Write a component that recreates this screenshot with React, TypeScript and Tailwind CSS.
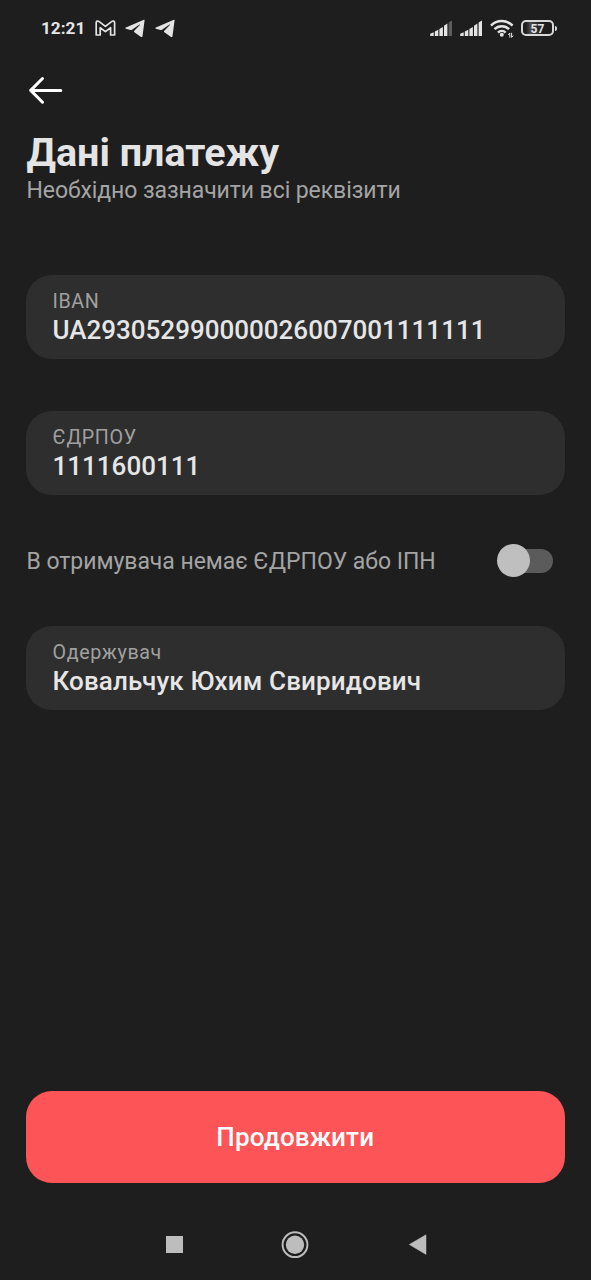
import React from 'react';

const TelegramIcon = () => (
  <svg width="20" height="19" viewBox="0 0 20 19" fill="#e4e4e4">
    <path d="M18.9 0.7 C19.4 0.5 19.7 0.8 19.6 1.3 L17.5 17.2 C17.3 18.2 16.6 18.3 16 17.9 L9.4 13.3 C8.9 12.9 8.9 12.3 9.3 11.8 L14.9 5.9 C15.2 5.5 14.9 5.3 14.5 5.5 L7 10.7 C6.5 11.1 6 11.2 5.4 11 L0.9 9.7 C0.2 9.4 0.2 8.8 0.9 8.5 Z" />
  </svg>
);

const GmailIcon = () => (
  <svg width="21" height="17" viewBox="0 0 21 17" fill="none" stroke="#e4e4e4" strokeWidth="1.7" strokeLinejoin="round">
    <path d="M1.2 2.7 C1.2 0.8 3 0.6 4.2 1.6 L10.4 6.4 L16.6 1.6 C17.8 0.6 19.6 0.8 19.6 2.7 V15 H15.6 V7.7 L10.4 11.6 L5.2 7.7 V15 H1.2 Z" />
  </svg>
);

const SignalIcon: React.FC<{ lastFill: string }> = ({ lastFill }) => (
  <svg width="23" height="17" viewBox="0 0 23 17" fill="#e4e4e4">
    <path d="M0.2 13.8 L3.7 12.2 V16 H0.2 Z" />
    <path d="M4.8 11.6 L8.3 9.8 V16 H4.8 Z" />
    <path d="M9.4 9 L12.9 7 V16 H9.4 Z" />
    <path d="M14 5.8 L17.4 3.6 V16 H14 Z" />
    <path d="M18.6 2.4 L22 0.4 V16 H18.6 Z" fill={lastFill} />
  </svg>
);

const WifiIcon = () => (
  <svg width="24" height="20" viewBox="0 0 24 20" fill="none" stroke="#e4e4e4" strokeWidth="2.5">
    <path d="M1 6.6 C7 0.5 16.6 0.5 22.6 6.6" />
    <path d="M4.5 10.2 C8.5 6.2 15.1 6.2 19.1 10.2" />
    <path d="M8 13.6 C10.1 11.5 13.5 11.5 15.6 13.6" />
    <circle cx="11.8" cy="15.8" r="2" fill="#e4e4e4" stroke="none" />
    <path d="M19.8 18.6 V14 L18.2 15.8 M21.6 13.8 V18.4 L23.2 16.6" strokeWidth="1" />
  </svg>
);

const StatusBar = () => (
  <div className="flex h-[56px] items-center pl-[41px] pr-[33px] text-[#e4e4e4]">
    <span className="w-[54px] pt-[2px] text-[17.2px] font-bold leading-none">12:21</span>
    <GmailIcon />
    <div className="ml-[9px] flex gap-[10px]">
      <TelegramIcon />
      <TelegramIcon />
    </div>
    <div className="ml-auto flex items-center">
      <SignalIcon lastFill="#5c5c5c" />
      <div className="ml-[7px]">
        <SignalIcon lastFill="#e4e4e4" />
      </div>
      <div className="ml-[7px] mt-[2px]">
        <WifiIcon />
      </div>
      <div className="ml-[7px] flex h-[16px] w-[33px] items-center justify-center rounded-[5px] border-2 border-[#d8d8d8] bg-linear-to-r from-[#1e1e1e] from-10% via-[#4a4a4a] via-25% to-[#1e1e1e] to-65%">
        <span className="pt-px text-[12px] font-bold leading-none tracking-[0.2px]">57</span>
      </div>
      <div className="ml-px mr-px h-[5px] w-[2px] rounded-r-sm bg-[#d8d8d8]" />
    </div>
  </div>
);

interface FieldProps {
  label: string;
  value: string;
  valueClass?: string;
}

const Field: React.FC<FieldProps> = ({ label, value, valueClass = '' }) => (
  <div className="h-[84px] rounded-[26px] bg-[#2e2e2e] pl-[26.5px] pt-[14px]">
    <div className="text-[19.7px] leading-[25px] tracking-[0.62px] text-[#a0a0a0]">{label}</div>
    <div className={`text-[26px] font-medium leading-[32px] text-[#e6e6e6] ${valueClass}`}>{value}</div>
  </div>
);

const App: React.FC = () => {
  return (
    <div className="flex h-[1280px] w-[591px] flex-col overflow-hidden bg-[#1e1e1e] font-[Roboto,sans-serif]">
      <StatusBar />

      {/* Back */}
      <div className="pl-[28px] pt-[20px]">
        <svg width="36" height="28" viewBox="0 0 36 28" fill="none" stroke="#ffffff" strokeWidth="3" strokeLinecap="round" strokeLinejoin="round">
          <path d="M32.8 14.4 H3 M14.5 2.5 L2.7 14.4 L14.5 26.2" />
        </svg>
      </div>

      <main className="flex flex-1 flex-col pl-[26px] pr-[26.5px] pt-[26px]">
        <h1 className="pl-[0.5px] text-[39.5px] font-bold leading-[46px] text-[#e4e4e4]">Дані платежу</h1>
        <p className="pl-[0.5px] pt-px text-[23px] leading-[27px] tracking-[-0.08px] text-[#a4a4a4]">Необхідно зазначити всі реквізити</p>

        <div className="mt-[71px] flex flex-col gap-[52px]">
          <Field label="IBAN" value="UA293052990000026007001111111" />
          <Field label="ЄДРПОУ" value="1111600111" />
        </div>

        <div className="flex h-[131px] items-center justify-between pr-[11.5px]">
          <span className="pl-[0.5px] pt-[2px] text-[23px] leading-[27px] tracking-[-0.04px] text-[#a4a4a4]">В отримувача немає ЄДРПОУ або ІПН</span>
          <div className="flex h-[24px] w-[50px] items-center rounded-full bg-[#5b5b5b]">
            <div className="-ml-[6px] h-[33px] w-[33px] shrink-0 rounded-full bg-[#bfbfbf]" />
          </div>
        </div>

        <Field label="Одержувач" value="Ковальчук Юхим Свиридович" valueClass="tracking-[0.14px]" />

        <button className="mt-auto h-[92px] rounded-[26px] bg-[#fd5457] text-[26px] font-medium leading-[32px] tracking-[0.15px] text-white">
          Продовжити
        </button>
      </main>

      {/* System navigation */}
      <nav className="mt-[48px] flex h-[49px] items-start pl-[166px]">
        <div className="mt-[5px] h-[17px] w-[17px] bg-[#bdbdbd]" />
        <svg className="ml-[98px]" width="28" height="28" viewBox="0 0 28 28">
          <circle cx="14" cy="13.7" r="12.4" fill="none" stroke="#bdbdbd" strokeWidth="2" />
          <circle cx="14" cy="13.7" r="9.2" fill="#bdbdbd" />
        </svg>
        <svg className="ml-[100px] mt-[3px]" width="18" height="21" viewBox="0 0 18 21">
          <path d="M0.3 10.5 L17 0.8 V20.4 Z" fill="#bdbdbd" stroke="#bdbdbd" strokeWidth="0.5" strokeLinejoin="round" />
        </svg>
      </nav>
    </div>
  );
};

export default App;
